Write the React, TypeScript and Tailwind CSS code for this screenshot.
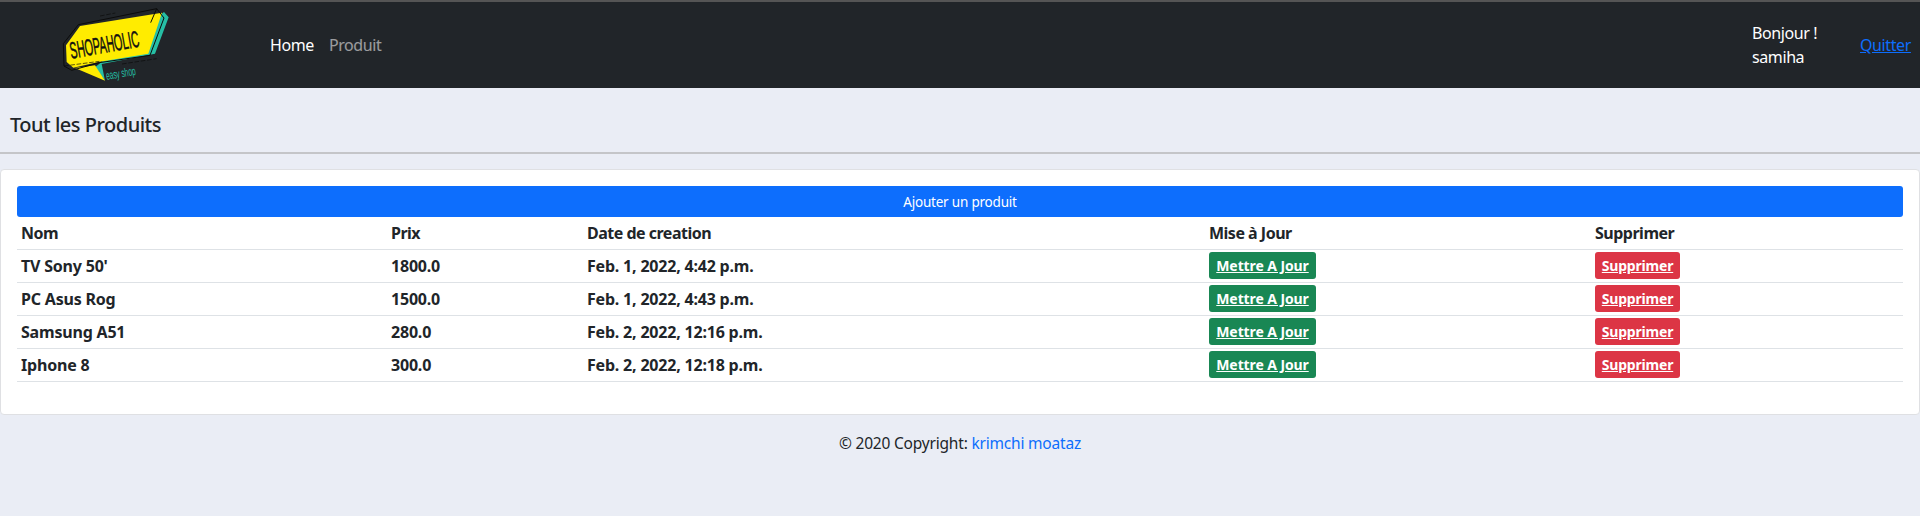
const products = [
  { name: "TV Sony 50'", price: "1800.0", date: "Feb. 1, 2022, 4:42 p.m." },
  { name: "PC Asus Rog", price: "1500.0", date: "Feb. 1, 2022, 4:43 p.m." },
  { name: "Samsung A51", price: "280.0", date: "Feb. 2, 2022, 12:16 p.m." },
  { name: "Iphone 8", price: "300.0", date: "Feb. 2, 2022, 12:18 p.m." },
];

function Logo() {
  return (
    <svg width="150" height="86" viewBox="0 0 450 258" fill="none">
      <polygon points="372,30 386,46 345,155 185,186 195,236 165,196" fill="#26bfa5" />
      <polygon points="105,198 165,190 195,236" fill="#ffec00" />
      <polygon points="78,130 120,72 366,32 325,155 175,180 100,197 80,180" fill="#ffec00" />
      <polyline points="332,62 350,20 372,48 330,160 178,182 95,205 72,192 70,125 115,68 350,20" stroke="#0b0b0b" strokeWidth="3" />
      <path d="M180 42 L226 33 M246 186 L350 170 M72 192 L178 178" stroke="#0b0b0b" strokeWidth="2" strokeDasharray="14 5" />
      <text
        transform="translate(94 170) rotate(-10) scale(0.466 1)"
        fontFamily="'Liberation Sans', sans-serif"
        fontSize="70"
        fill="#111"
        stroke="#111"
        strokeWidth="1.5"
      >
        SHOPAHOLIC
      </text>
      <text
        transform="translate(200 234) rotate(-10) scale(0.56 1)"
        fontFamily="'Liberation Sans', sans-serif"
        fontSize="36"
        fill="#26bfa5"
      >
        easy shop
      </text>
    </svg>
  );
}

export default function App() {
  return (
    <div className="min-h-[516px] bg-[#eaedf5] font-['Noto_Sans',sans-serif] text-[16px] tracking-[-0.2px] text-[#212529]">
      <nav className="flex h-[88px] items-center border-t-2 border-[#555] bg-[#212529] pl-[40px] pr-[10px] tracking-[-0.4px]">
        <Logo />
        <div className="ml-[80px] flex gap-[15px]">
          <a className="text-white">Home</a>
          <a className="text-white/55">Produit</a>
        </div>
        <div className="ml-auto w-[64px] whitespace-nowrap text-white leading-[24px]">
          <div>Bonjour !</div>
          <div>samiha</div>
        </div>
        <a className="ml-[44px] w-[50px] text-[#0d6efd] underline">Quitter</a>
      </nav>

      <h1 className="flex h-[64px] items-center pl-[10px] pt-[10px] text-[20px] font-medium tracking-[-0.5px]">Tout les Produits</h1>
      <hr className="border-t-2 border-[#c4c5c8]" />

      <div className="mt-[15px] h-[246px] rounded-[4px] border border-[#dfe0e3] bg-white px-[16px] pt-[16px]">
        <button className="h-[31px] w-full rounded-[3px] bg-[#0d6efd] pt-[1px] text-[13.5px] text-white">Ajouter un produit</button>
        <table className="w-full table-fixed border-collapse font-bold">
          <thead>
            <tr className="h-[32px] border-b border-[#dee2e6] tracking-[-0.5px]">
              <th className="w-[370px] pl-[4px] text-left">Nom</th>
              <th className="w-[196px] pl-[4px] text-left">Prix</th>
              <th className="w-[622px] pl-[4px] text-left">Date de creation</th>
              <th className="w-[386px] pl-[4px] text-left">Mise à Jour</th>
              <th className="pl-[4px] text-left">Supprimer</th>
            </tr>
          </thead>
          <tbody>
            {products.map((p) => (
              <tr key={p.name} className="h-[33px] border-b border-[#dee2e6]">
                <td className="pl-[4px]">{p.name}</td>
                <td className="pl-[4px]">{p.price}</td>
                <td className="pl-[4px]">{p.date}</td>
                <td className="pl-[4px]">
                  <a className="flex h-[27px] w-[107px] items-center justify-center rounded-[3px] bg-[#198754] text-[14px] tracking-[-0.1px] text-white underline">
                    Mettre A Jour
                  </a>
                </td>
                <td className="pl-[4px]">
                  <a className="flex h-[27px] w-[85px] items-center justify-center rounded-[3px] bg-[#dc3545] text-[14px] tracking-[-0.2px] text-white underline">
                    Supprimer
                  </a>
                </td>
              </tr>
            ))}
          </tbody>
        </table>
      </div>

      <footer className="pt-[16px] text-center text-[15.5px] leading-[24px]">
        © 2020 Copyright: <a className="text-[#0d6efd]">krimchi moataz</a>
      </footer>
    </div>
  );
}
